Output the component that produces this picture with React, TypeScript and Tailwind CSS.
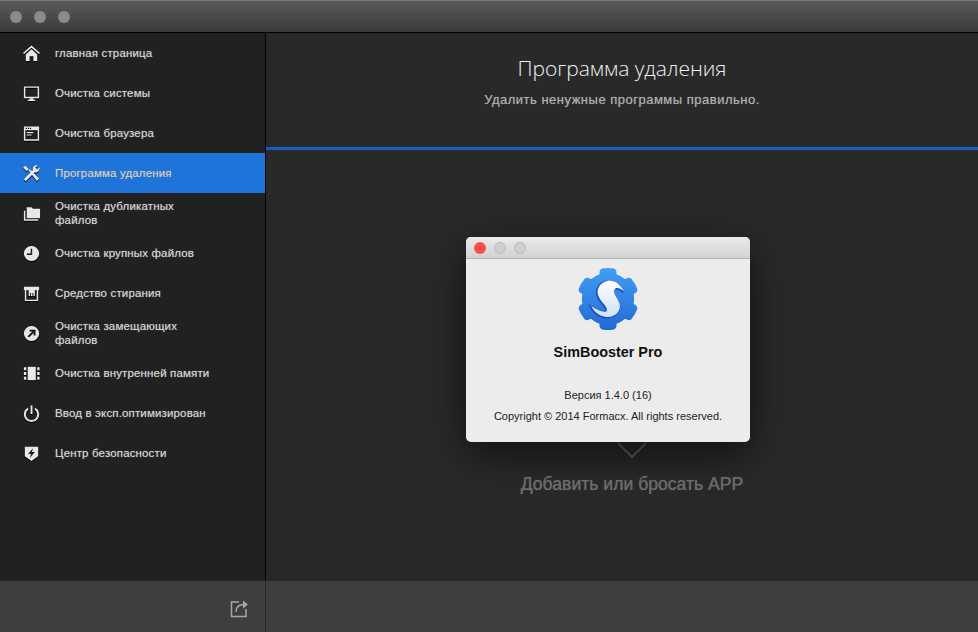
import type { ReactNode } from 'react';

function Icon({ children }: { children: ReactNode }) {
  return (
    <svg viewBox="0 0 20 20" className="w-[19px] h-[19px] shrink-0 drop-shadow-[0_1px_0_#000]" fill="#e8e8e8">
      {children}
    </svg>
  );
}

const NAV = [
  {
    label: 'главная страница',
    icon: (
      <Icon>
        <path d="M10 1.500 1 9.500l1.200 1L10 4l7.800 6.500 1.200-1z" />
        <path d="M4 11 10 5.600 16 11v7h-4v-5H8v5H4z" />
      </Icon>
    ),
  },
  {
    label: 'Очистка системы',
    icon: (
      <Icon>
        <path fillRule="evenodd" d="M2 2.500h16v12.500H2zM3.500 4v9.500h13V4z" />
        <path d="M8 15h4v1.500h2V18H6v-1.500h2z" />
      </Icon>
    ),
  },
  {
    label: 'Очистка браузера',
    icon: (
      <Icon>
        <path fillRule="evenodd" d="M2 2.500h16v15H2zM3.500 6.500v9.500h13V6.500zM4 4v1.200h1.200V4zM6.200 4v1.200h1.200V4zM8.400 4v1.200h1.200V4z" />
        <path d="M5 8.500h7v1.200H5zM5 11h5v1.200H5z" />
      </Icon>
    ),
  },
  {
    label: 'Программа удаления',
    active: true,
    icon: (
      <Icon>
        <path d="m3.500 1.800 3.600 3.600-2.200 2.200-3.600-3.600zM6.900 6.800l1.400-1.400L18 15.600l-2.400 2.400z" />
        <path d="M18.500 3.500 16 6l-2-2 2.500-2.500a4 4 0 0 0-5 5L2 16l2 2.200 9.400-9.600a4 4 0 0 0 5.100-5.100z" />
      </Icon>
    ),
  },
  {
    label: 'Очистка дубликатных файлов',
    icon: (
      <Icon>
        <path d="M5 3.500h5l1.500 1.500H19v10H5z" />
        <path d="M2 7h1.500v9H17v1.500H2z" />
      </Icon>
    ),
  },
  {
    label: 'Очистка крупных файлов',
    icon: (
      <Icon>
        <path fillRule="evenodd" d="M10 2a8 8 0 1 1 0 16 8 8 0 0 1 0-16zM9.200 5v5h-4v1.500h5.500V5z" />
      </Icon>
    ),
  },
  {
    label: 'Средство стирания',
    icon: (
      <Icon>
        <path fillRule="evenodd" d="M2 3h16v3.500h-1V18H3V6.500H2zM4.500 6.500V16.500h11V6.500h-2v6h-1.500v-3h-1v3H9.500v-3h-1v3H7v-6z" />
      </Icon>
    ),
  },
  {
    label: 'Очистка замещающих файлов',
    icon: (
      <Icon>
        <path fillRule="evenodd" d="M10 2a8 8 0 1 1 0 16 8 8 0 0 1 0-16zM8 6v2h2.800L6 12.800 7.400 14.200l4.800-4.800V12h2V6z" />
      </Icon>
    ),
  },
  {
    label: 'Очистка внутренней памяти',
    icon: (
      <Icon>
        <path d="M6 3h8.500v14H6z" />
        <path d="M2 3.500h2.500v3H2zM2 8.500h2.500v3H2zM2 13.500h2.500v3H2zM16 3.500h2.500v3H16zM16 8.500h2.500v3H16zM16 13.500h2.500v3H16z" />
      </Icon>
    ),
  },
  {
    label: 'Ввод в эксп.оптимизирован',
    icon: (
      <Icon>
        <path d="M9 1.500h2v9H9z" />
        <path d="M6.500 3.800v2.300a6 6 0 1 0 7 0V3.800a8 8 0 1 1-7 0z" />
      </Icon>
    ),
  },
  {
    label: 'Центр безопасности',
    icon: (
      <Icon>
        <path fillRule="evenodd" d="M3 3h14v10l-7 5-7-5zM11.500 4.500 6.500 10.500h3l-1 4 5-6h-3z" />
      </Icon>
    ),
  },
];

function Dot({ className }: { className: string }) {
  return <span className={`w-3 h-3 rounded-full ${className}`} />;
}

// six rounded teeth on a round body, one outline so the gradient runs through it
function gearPath() {
  const pt = (r: number, deg: number) => {
    const a = ((deg - 90) * Math.PI) / 180;
    return `${(32 + r * Math.cos(a)).toFixed(2)} ${(32 + r * Math.sin(a)).toFixed(2)}`;
  };
  let d = `M${pt(27, -19)}`;
  for (let i = 0; i < 6; i++) {
    const c = i * 60;
    d += `Q${pt(31.500, c - 17)} ${pt(32, c - 11)}Q${pt(32.500, c)} ${pt(32, c + 11)}Q${pt(31.500, c + 17)} ${pt(27, c + 19)}`;
    d += `A27 27 0 0 1 ${pt(27, c + 41)}`;
  }
  return d + 'z';
}

function Logo() {
  const s =
    'M48 25C43 16 36 12 30 14C22 16 18 24 22 31C25 37 31 40 30 45C29 47 22 45 14 40C18 48 26 52 33 51C41 50 45 43 43 37C41 31 36 27 38 23C39 20 44 21 48 25z';
  return (
    <svg viewBox="0 0 64 64" className="w-[62px] h-[64px]">
      <defs>
        <linearGradient id="gear" gradientUnits="userSpaceOnUse" x1="0" y1="0" x2="0" y2="64">
          <stop offset="0" stopColor="#419ff2" />
          <stop offset="1" stopColor="#2368d4" />
        </linearGradient>
        <linearGradient id="letter" x1="0" y1="0" x2="0" y2="1">
          <stop offset="0" stopColor="#ffffff" />
          <stop offset="1" stopColor="#cfe2f8" />
        </linearGradient>
      </defs>
      <path d={gearPath()} fill="url(#gear)" />
      <path d={s} fill="#1a52c2" stroke="#1a52c2" strokeWidth="2" />
      <path d={s} fill="url(#letter)" transform="translate(0.800 -0.500)" />
    </svg>
  );
}

export default function App() {
  return (
    <div className="w-[978px] h-[632px] flex flex-col relative overflow-hidden bg-[#292929] font-['Liberation_Sans',sans-serif]">
      {/* title bar */}
      <div className="h-8 shrink-0 flex items-center gap-3 pl-[10px] bg-gradient-to-b from-[#5a5a5a] to-[#3a3a3a] border-t border-[#777]">
        <Dot className="bg-[#8a8a8a]" />
        <Dot className="bg-[#8a8a8a]" />
        <Dot className="bg-[#8a8a8a]" />
      </div>

      <div className="flex-1 flex min-h-0 border-t border-black">
        {/* sidebar */}
        <nav className="w-[266px] shrink-0 bg-[#212121] border-r border-black">
          {NAV.map((item) => (
            <div
              key={item.label}
              className={`h-10 flex items-center pl-[22px] ${item.active ? 'bg-[#1e74d8]' : ''}`}
            >
              <span className="w-[33px] shrink-0">{item.icon}</span>
              <span className="w-[156px] text-[11.5px] leading-[14px] tracking-[0.15px] text-[#d4d4d4] [text-shadow:0_0_1px_#8a8a8a]">
                {item.label}
              </span>
            </div>
          ))}
        </nav>

        {/* main panel */}
        <main className="flex-1 flex flex-col items-center">
          <div className="w-full h-[117px] shrink-0 flex flex-col items-center border-b-[3px] border-[#1a5cc0]">
            <h1 className="mt-[21px] text-[21px] leading-7 font-light text-[#f2f2f2] font-['Open_Sans',sans-serif]">
              Программа удаления
            </h1>
            <p className="mt-[10px] text-[13px] leading-4 tracking-[0.5px] text-[#b0b0b0] [text-shadow:0_0_1px_#777]">
              Удалить ненужные программы правильно.
            </p>
          </div>
          <div className="w-full pl-5 flex flex-col items-center">
            <svg viewBox="0 0 30 20" className="mt-[292px] w-[30px] h-5 shrink-0" fill="none">
              <path d="M1 1 15 15 29 1" stroke="#5c5c5c" strokeWidth="2" />
            </svg>
            <p className="mt-[10px] text-[17.6px] leading-6 text-[#707070] [text-shadow:0_0_1px_#666]">
              Добавить или бросать APP
            </p>
          </div>
        </main>
      </div>

      {/* footer */}
      <div className="h-[52px] shrink-0 flex bg-[#3e3e3e] border-t border-black/40">
        <div className="w-[266px] shrink-0 flex items-center justify-end pr-[15px] border-r border-[#2a2a2a]">
          <svg viewBox="0 0 20 20" className="w-5 h-5 mt-[3px]" fill="none" stroke="#a8a8a8" strokeWidth="1.500">
            <path d="M9 4H1.500v14.500H16V11" />
            <path d="M6 14c0-5 3-7.500 8-7.500" />
            <path d="M13 2.500 18 6.500l-5 4z" fill="#a8a8a8" stroke="none" />
          </svg>
        </div>
      </div>

      {/* about dialog */}
      <div className="absolute left-[466px] top-[237px] w-[284px] h-[205px] rounded-[5px] bg-[#ececec] flex flex-col items-center shadow-[0_12px_40px_rgba(0,0,0,0.6)]">
        <div className="w-full h-[22px] shrink-0 flex items-center gap-2 pl-2 rounded-t-[5px] bg-gradient-to-b from-[#ebebeb] to-[#d2d2d2] border-b border-[#b4b4b4]">
          <Dot className="bg-[#fc4f4a]" />
          <Dot className="bg-[#cfcfcf] border border-[#bdbdbd]" />
          <Dot className="bg-[#cfcfcf] border border-[#bdbdbd]" />
        </div>
        <div className="mt-[8px]">
          <Logo />
        </div>
        <p className="mt-[12px] text-[14.4px] leading-[18px] font-bold text-[#111]">SimBooster Pro</p>
        <p className="mt-[27px] text-[11px] leading-[14px] text-[#222]">Версия 1.4.0 (16)</p>
        <p className="mt-[7px] text-[11px] leading-[14px] text-[#222]">Copyright © 2014 Formacx. All rights reserved.</p>
      </div>
    </div>
  );
}
